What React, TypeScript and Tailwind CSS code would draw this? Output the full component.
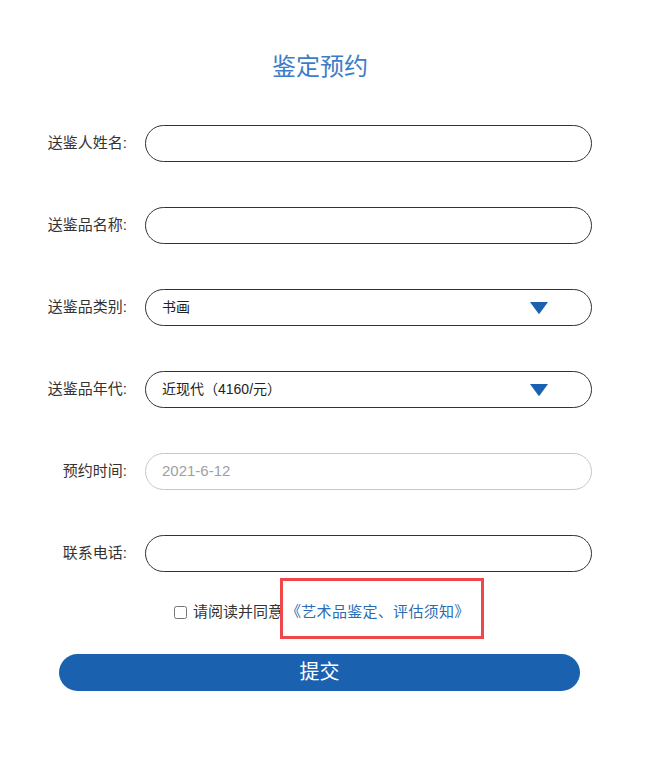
import React from "react";

const font = { fontFamily: '"Liberation Sans", "Noto Sans CJK SC", sans-serif' };

function Arrow() {
  return (
    <svg width="18" height="12" viewBox="0 0 18 12" className="shrink-0">
      <path d="M0 0 H18 L9.6 11.5 Q9 12 8.4 11.5 Z" fill="#1a62b0" />
    </svg>
  );
}

function Row({ label, children }: { label: string; children: React.ReactNode }) {
  return (
    <div className="flex items-center">
      <div className="w-[127px] text-right text-[15px] text-[#333]">{label}</div>
      <div className="ml-[18px] w-[447px]">{children}</div>
    </div>
  );
}

const box = "h-[37px] w-full rounded-full border flex items-center pl-[16px] pr-[43px] text-[14px]";

export default function App() {
  return (
    <div className="w-[650px] min-h-[774px] bg-white" style={font}>
      <h1 className="pt-[52px] pr-[10px] text-center text-[24px] leading-[30px] text-[#3d7cc8]">鉴定预约</h1>

      <div className="mt-[43px] flex flex-col gap-[45px]">
        <Row label="送鉴人姓名:">
          <div className={`${box} border-[#333]`} />
        </Row>
        <Row label="送鉴品名称:">
          <div className={`${box} border-[#333]`} />
        </Row>
        <Row label="送鉴品类别:">
          <div className={`${box} border-[#333] justify-between text-[#222]`}>
            <span>书画</span>
            <Arrow />
          </div>
        </Row>
        <Row label="送鉴品年代:">
          <div className={`${box} border-[#333] justify-between text-[#222]`}>
            <span>近现代（4160/元）</span>
            <Arrow />
          </div>
        </Row>
        <Row label="预约时间:">
          <div className={`${box} border-[#c8c8c8] text-[#a0a0a0] text-[15px]`}>2021-6-12</div>
        </Row>
        <Row label="联系电话:">
          <div className={`${box} border-[#333]`} />
        </Row>
      </div>

      <div className="relative mt-[29px] flex items-center pl-[174px] text-[15px]">
        <input type="checkbox" className="mr-[6px] h-[13px] w-[13px]" />
        <span className="text-[#333]">请阅读并同意</span>
        <span className="ml-[3px] text-[#2b6cb5] tracking-[0.3px]">《艺术品鉴定、评估须知》</span>
        <div className="pointer-events-none absolute left-[280px] top-[-23px] h-[61px] w-[204px] border-[3px] border-[#f0474a]" />
      </div>

      <div className="ml-[59px] mt-[30px] flex h-[37px] w-[521px] items-center justify-center rounded-full bg-[#1a62b0] text-[20px] text-white">
        提交
      </div>
    </div>
  );
}
